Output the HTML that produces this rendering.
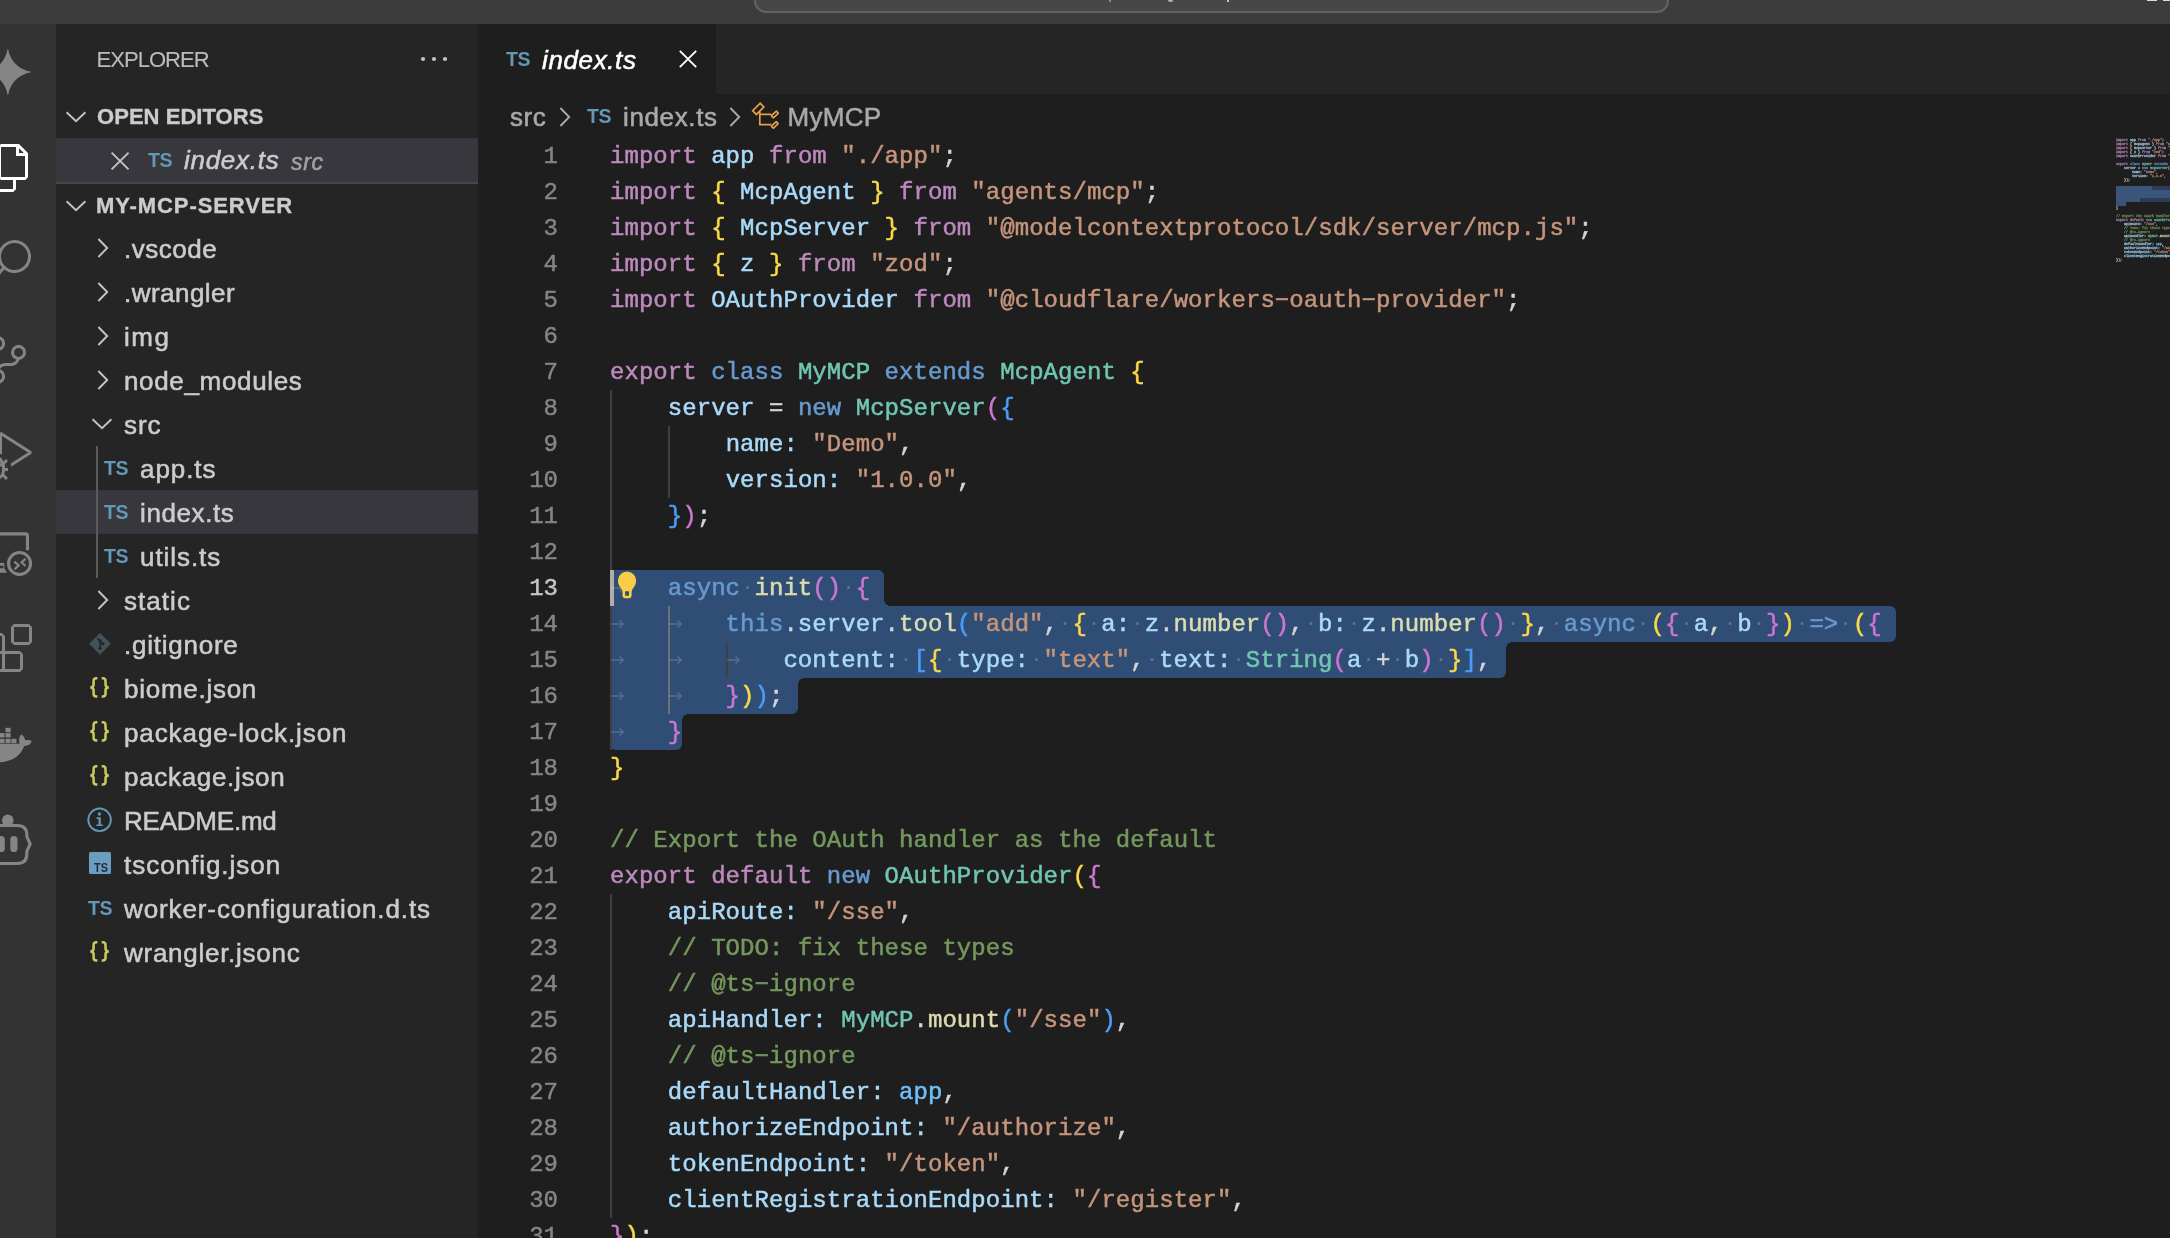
<!DOCTYPE html>
<html><head><meta charset="utf-8"><title>index.ts - my-mcp-server</title>
<style>
*{box-sizing:border-box;margin:0;padding:0}
html,body{width:2170px;height:1238px;overflow:hidden;background:#1e1e1e}
body{will-change:transform;position:relative;font-family:"Liberation Sans",sans-serif;color:#cccccc}
.abs,.ic,.rt,.tsi,.jsi,.sel,.g,.ln,.cl,.tscfg{position:absolute}
#title{left:0;top:0;width:2170px;height:24px;background:#3c3c3c}
#cmd{left:754px;top:-30px;width:915px;height:43px;background:#474747;border:2px solid #636363;border-radius:12px}
#act{left:0;top:24px;width:56px;height:1214px;background:#333333}
#side{left:56px;top:24px;width:422px;height:1214px;background:#252526}
#tabs{left:478px;top:24px;width:1692px;height:70px;background:#252526}
#tab{left:478px;top:24px;width:238px;height:70px;background:#1e1e1e}
.hl{left:56px;width:422px;height:44px;background:#37373d}
.rt{font-size:26px;line-height:44px;white-space:nowrap;color:#cccccc;-webkit-text-stroke:0.55px}
.tsi{font-weight:bold;color:#6398b7;font-size:19.5px;line-height:28px;letter-spacing:-0.4px}
.jsi{font-weight:bold;color:#cbcb5a;font-size:21px;line-height:34px;white-space:nowrap}
.tscfg{width:22px;height:22px;background:#6b9dc0;border-radius:1.5px}
.tscfg span{position:absolute;left:5.8px;top:8.3px;font-size:13.7px;line-height:13px;font-weight:bold;color:#1f2d3a;letter-spacing:0;display:inline-block;transform:scaleX(0.8);transform-origin:0 0}
.hdr{font-size:22px;line-height:44px;white-space:nowrap;-webkit-text-stroke:0.35px}
.ln{left:478px;width:80px;text-align:right;font-family:"Liberation Mono",monospace;font-size:24px;line-height:36px;height:36px;color:#858585;white-space:pre;-webkit-text-stroke:0.45px}
.ln.act{color:#c6c6c6}
.cl{left:610px;font-family:"Liberation Mono",monospace;font-size:24px;line-height:36px;height:36px;white-space:pre;letter-spacing:0.05px;color:#d4d4d4;-webkit-text-stroke:0.5px}
.dot{display:inline-block;width:14.45px;height:36px;vertical-align:top;background:radial-gradient(circle at 50% 16.6px, rgba(227,228,226,0.24) 1.1px, transparent 1.9px)}
.tb{display:inline-block;height:36px;vertical-align:top;position:relative}
.ar{position:absolute;left:0;top:11px}
.sel{background:#304e75}
#mm{font-family:"Liberation Mono",monospace;font-size:24px;letter-spacing:0.05px;-webkit-text-stroke:2.2px;opacity:0.78}
.ml{height:28.900px;line-height:28.900px;white-space:pre;overflow:hidden}
.g{width:2px}
.k{color:#bc89bd}
.b{color:#679ad1}
.v{color:#aadafa}
.t{color:#71c6b1}
.f{color:#dcdcaf}
.s{color:#c5947c}
.c{color:#74985d}
.p{color:#d4d4d4}
.y{color:#f9d849}
.m{color:#cc76d1}
.u{color:#4a9df8}
.n{color:#6fbff9}
.w{color:rgba(227,228,226,0.20)}
</style></head><body>
<div class="abs" id="title"></div>
<div class="abs" id="cmd"></div>
<div class="abs" style="left:1109px;top:0;width:2px;height:2px;background:#8a8a8a"></div>
<div class="abs" style="left:1168px;top:0;width:5px;height:2px;background:#b0b0b0;border-radius:0 0 3px 3px"></div>
<div class="abs" style="left:1227px;top:0;width:2px;height:2px;background:#c0c0c0"></div>
<div class="abs" style="left:2147px;top:0;width:10px;height:1px;background:#d8d8d8"></div>
<div class="abs" style="left:2163px;top:0;width:7px;height:1px;background:#d8d8d8"></div>
<div class="abs" id="act"></div>
<div class="abs" id="side"></div>
<div class="abs" id="tabs"></div>
<div class="abs" id="tab"></div>
<svg class="ic" style="left:0;top:0" width="56" height="1238" viewBox="0 0 56 1238"><path transform="translate(7.9,72)" d="M0,-23.8 Q3.8,-3.8 23.8,0 Q3.8,3.8 0,23.8 Q-3.8,3.8 -23.8,0 Q-3.8,-3.8 0,-23.8 Z" fill="#858585"/><g transform="translate(-16,144) scale(2)"><path d="M17.5 0h-9L7 1.5V6H2.5L1 7.5v15.07L2.5 24h12.07L16 22.57V18h4.7l1.3-1.43V4.5L17.5 0zm0 2.12l2.38 2.38H17.5V2.12zm-3 20.38h-12v-15H7v9.07L8.5 18h6v4.5zm6-6h-12v-15H16V6h4.5v10.5z" fill="#ffffff"/></g><g transform="translate(-16,240) scale(2)"><path d="M15.25 0a8.25 8.25 0 0 0-6.18 13.72L1 22.88l1.12 1 8.05-9.12A8.251 8.251 0 1 0 15.25.01V0zm0 15a6.75 6.75 0 1 1 0-13.5 6.75 6.75 0 0 1 0 13.5z" fill="#858585"/></g><g transform="translate(-16,336) scale(2)"><path d="M21.007 8.222A3.738 3.738 0 0 0 15.045 5.2a3.737 3.737 0 0 0 1.156 6.583 2.988 2.988 0 0 1-2.668 1.67h-2.99a4.456 4.456 0 0 0-2.989 1.165V7.4a3.737 3.737 0 1 0-1.494 0v9.117a3.776 3.776 0 1 0 1.816.099 2.99 2.99 0 0 1 2.668-1.667h2.99a4.484 4.484 0 0 0 4.223-3.039 3.736 3.736 0 0 0 3.25-3.687zM4.565 3.738a2.242 2.242 0 1 1 4.484 0 2.242 2.242 0 0 1-4.484 0zm4.484 16.441a2.242 2.242 0 1 1-4.484 0 2.242 2.242 0 0 1 4.484 0zm8.221-9.715a2.242 2.242 0 1 1 0-4.485 2.242 2.242 0 0 1 0 4.485z" fill="#858585"/></g><g transform="translate(-16,432) scale(2)"><path d="M10.94 13.5l-1.32 1.32a3.73 3.73 0 0 0-7.24 0L1.06 13.5 0 14.56l1.72 1.72-.22.22V18H0v1.5h1.5v.08c.077.489.214.966.41 1.42L0 22.94 1.06 24l1.65-1.65A4.308 4.308 0 0 0 6 24a4.31 4.31 0 0 0 3.29-1.65L10.94 24 12 22.94 10.09 21c.198-.464.336-.951.41-1.45v-.1H12V18h-1.5v-1.5l-.22-.22L12 14.56l-1.06-1.06zM6 13.5a2.25 2.25 0 0 1 2.25 2.25h-4.5A2.25 2.25 0 0 1 6 13.5zm3 6a3.33 3.33 0 0 1-3 3 3.33 3.33 0 0 1-3-3v-2.25h6v2.25zm14.76-9.9v1.26L13.5 17.37V15.6l8.5-5.37L9 2v9.46a5.07 5.07 0 0 0-1.5-.72V.63L8.64 0l15.12 9.6z" fill="#858585"/></g><g fill="none" stroke="#858585"><path d="M-12 533.9 H25.4 Q27.45 533.9 27.45 536 V550.2" stroke-width="3.1"/><circle cx="19.55" cy="563.5" r="11" stroke-width="3.1"/><path d="M14.35 561.6 L18.75 565.3 L14.5 569.4 M25.5 558.9 L21.65 562.3 L25.5 566" stroke-width="2.2"/></g><path d="M-6 563.1 H4.3 V568.2 L6.9 572.8 H-6 V568.2 H3.4 V565.7 H-6 Z" fill="#858585"/><g transform="translate(-16,624) scale(2)"><path d="M13.5 1.5L15 0h7.5L24 1.5V9l-1.5 1.5H15L13.5 9V1.5zm1.5 0V9h7.5V1.5H15zM0 15V6l1.5-1.5H9L10.5 6v7.5H18l1.5 1.5v7.5L18 24H1.5L0 22.5V15zm9-1.5V6H1.5v7.5H9zM9 15H1.5v7.5H9V15zm1.5 7.5H18V15h-7.5v7.5z" fill="#858585"/></g><rect x="5.5" y="727.8" width="5.1" height="4.4" fill="#858585"/><rect x="-0.6" y="733.1" width="5.1" height="4.4" fill="#858585"/><rect x="5.5" y="733.1" width="5.1" height="4.4" fill="#858585"/><rect x="-0.6" y="738.8" width="5.1" height="4.4" fill="#858585"/><rect x="5.5" y="738.8" width="5.1" height="4.4" fill="#858585"/><rect x="11.4" y="738.8" width="5.1" height="4.4" fill="#858585"/><path d="M-14 743.75 H19.6 C18.4 740 19.3 736 21.3 734.4 C23.6 735.6 25 738 25.2 740.3 C27.6 739.5 30 740 31.8 741.3 C30.5 744.2 27.6 746.3 24.2 746 C22.3 751.5 18 756.6 12.9 759 C8 761.4 3 762.4 -2 762.3 L-14 762.3 Z" fill="#858585"/><circle cx="7.76" cy="820.4" r="5.8" fill="#858585"/><path d="M-2 825.45 H17.2 Q26.85 825.45 26.85 835 V836.6 L30.2 844 L26.85 851.2 V854 Q26.85 863.45 17.2 863.45 H-2" fill="none" stroke="#858585" stroke-width="3.1" stroke-linejoin="round"/><rect x="10.3" y="835.9" width="7.2" height="16.1" rx="3.6" fill="#858585"/><rect x="-2.4" y="835.9" width="7.2" height="16.1" rx="3.6" fill="#858585"/></svg>
<div class="abs hdr" style="left:96.5px;top:38px;color:#bbbbbb;letter-spacing:-0.95px;-webkit-text-stroke:0.1px">EXPLORER</div>
<svg class="ic" style="left:420px;top:55px" width="28" height="8" viewBox="0 0 28 8"><circle cx="3" cy="4" r="2.1" fill="#c5c5c5"/><circle cx="14" cy="4" r="2.1" fill="#c5c5c5"/><circle cx="25" cy="4" r="2.1" fill="#c5c5c5"/></svg>
<svg class="ic" style="left:64px;top:109px" width="24" height="16" viewBox="0 0 24 16"><path d="M2.6 3.2 L12 12.3 L21.4 3.2" fill="none" stroke="#c5c5c5" stroke-width="1.9"/></svg>
<div class="abs hdr" style="left:97px;top:95px;font-weight:bold;color:#cccccc;letter-spacing:0.05px">OPEN EDITORS</div>
<div class="abs hl" style="top:138px"></div>
<svg class="ic" style="left:110px;top:151px" width="20" height="20" viewBox="0 0 20 20"><path d="M1.6 1.6 L18.6 18.4 M18.6 1.6 L1.6 18.4" stroke="#c5c5c5" stroke-width="1.9" fill="none"/></svg>
<div class="tsi" style="left:148px;top:146px">TS</div>
<div class="rt" style="left:184px;top:138px;font-style:italic;letter-spacing:0.72px">index.ts</div>
<div class="rt" style="left:291px;top:140px;font-style:italic;font-size:23px;color:#a2a2a2;letter-spacing:0.7px">src</div>
<div class="abs" style="left:56px;top:182px;width:422px;height:2px;background:#464648"></div>
<svg class="ic" style="left:64px;top:198px" width="24" height="16" viewBox="0 0 24 16"><path d="M2.6 3.2 L12 12.3 L21.4 3.2" fill="none" stroke="#c5c5c5" stroke-width="1.9"/></svg>
<div class="abs hdr" style="left:96px;top:184px;font-weight:bold;color:#cccccc;letter-spacing:0.9px">MY-MCP-SERVER</div>
<div class="abs hl" style="top:490px"></div>
<div class="abs" style="left:96px;top:446px;width:2px;height:132px;background:#5a5a5a"></div>
<svg class="ic" style="left:94.7px;top:236px" width="16" height="24" viewBox="0 0 16 24"><path d="M3.4 3 L12.2 12 L3.4 21" fill="none" stroke="#c5c5c5" stroke-width="1.9"/></svg><div class="rt" style="left:124px;top:227px;letter-spacing:0.53px;">.vscode</div><svg class="ic" style="left:94.7px;top:280px" width="16" height="24" viewBox="0 0 16 24"><path d="M3.4 3 L12.2 12 L3.4 21" fill="none" stroke="#c5c5c5" stroke-width="1.9"/></svg><div class="rt" style="left:124px;top:271px;letter-spacing:0.47px;">.wrangler</div><svg class="ic" style="left:94.7px;top:324px" width="16" height="24" viewBox="0 0 16 24"><path d="M3.4 3 L12.2 12 L3.4 21" fill="none" stroke="#c5c5c5" stroke-width="1.9"/></svg><div class="rt" style="left:124px;top:315px;letter-spacing:1.5px;">img</div><svg class="ic" style="left:94.7px;top:368px" width="16" height="24" viewBox="0 0 16 24"><path d="M3.4 3 L12.2 12 L3.4 21" fill="none" stroke="#c5c5c5" stroke-width="1.9"/></svg><div class="rt" style="left:124px;top:359px;letter-spacing:0.66px;">node_modules</div><svg class="ic" style="left:90px;top:416px" width="24" height="16" viewBox="0 0 24 16"><path d="M2.6 3.2 L12 12.3 L21.4 3.2" fill="none" stroke="#c5c5c5" stroke-width="1.9"/></svg><div class="rt" style="left:124px;top:403px;letter-spacing:0.95px;">src</div><div class="tsi" style="left:104px;top:454px">TS</div><div class="rt" style="left:140px;top:447px;letter-spacing:0.92px;">app.ts</div><div class="tsi" style="left:104px;top:498px">TS</div><div class="rt" style="left:140px;top:491px;letter-spacing:0.6px;">index.ts</div><div class="tsi" style="left:104px;top:542px">TS</div><div class="rt" style="left:140px;top:535px;letter-spacing:0.93px;">utils.ts</div><svg class="ic" style="left:94.7px;top:588px" width="16" height="24" viewBox="0 0 16 24"><path d="M3.4 3 L12.2 12 L3.4 21" fill="none" stroke="#c5c5c5" stroke-width="1.9"/></svg><div class="rt" style="left:124px;top:579px;letter-spacing:1.04px;">static</div><svg class="ic" style="left:87px;top:631px" width="26" height="26" viewBox="0 0 26 26"><path d="M13 2.4 L23.4 12.8 L13 23.2 L2.6 12.8 Z" fill="#45525a" stroke="#45525a" stroke-width="1" stroke-linejoin="round"/><path d="M10.2 7.2 L15.6 12.6 M13 10 V17" stroke="#252526" stroke-width="1.5" fill="none"/><circle cx="13" cy="17.3" r="1.7" fill="#252526"/><circle cx="15.8" cy="12.8" r="1.7" fill="#252526"/><circle cx="13" cy="9.6" r="1.6" fill="#252526"/></svg><div class="rt" style="left:124px;top:623px;letter-spacing:0.76px;">.gitignore</div><svg class="ic" style="left:88.9px;top:677.4px" width="22" height="22" viewBox="0 0 22 22"><g fill="none" stroke="#cbcb5a" stroke-width="2.5"><path d="M8.4 1.3 H7.3 Q4.6 1.3 4.6 4 V7.5 Q4.6 10.4 1.3 10.4 Q4.6 10.4 4.6 13.3 V16.8 Q4.6 19.5 7.3 19.5 H8.4"/><path d="M8.4 1.3 H7.3 Q4.6 1.3 4.6 4 V7.5 Q4.6 10.4 1.3 10.4 Q4.6 10.4 4.6 13.3 V16.8 Q4.6 19.5 7.3 19.5 H8.4" transform="translate(21.1,0) scale(-1,1)"/></g></svg><div class="rt" style="left:124px;top:667px;letter-spacing:0.73px;">biome.json</div><svg class="ic" style="left:88.9px;top:721.4px" width="22" height="22" viewBox="0 0 22 22"><g fill="none" stroke="#cbcb5a" stroke-width="2.5"><path d="M8.4 1.3 H7.3 Q4.6 1.3 4.6 4 V7.5 Q4.6 10.4 1.3 10.4 Q4.6 10.4 4.6 13.3 V16.8 Q4.6 19.5 7.3 19.5 H8.4"/><path d="M8.4 1.3 H7.3 Q4.6 1.3 4.6 4 V7.5 Q4.6 10.4 1.3 10.4 Q4.6 10.4 4.6 13.3 V16.8 Q4.6 19.5 7.3 19.5 H8.4" transform="translate(21.1,0) scale(-1,1)"/></g></svg><div class="rt" style="left:124px;top:711px;letter-spacing:0.9px;">package-lock.json</div><svg class="ic" style="left:88.9px;top:765.4px" width="22" height="22" viewBox="0 0 22 22"><g fill="none" stroke="#cbcb5a" stroke-width="2.5"><path d="M8.4 1.3 H7.3 Q4.6 1.3 4.6 4 V7.5 Q4.6 10.4 1.3 10.4 Q4.6 10.4 4.6 13.3 V16.8 Q4.6 19.5 7.3 19.5 H8.4"/><path d="M8.4 1.3 H7.3 Q4.6 1.3 4.6 4 V7.5 Q4.6 10.4 1.3 10.4 Q4.6 10.4 4.6 13.3 V16.8 Q4.6 19.5 7.3 19.5 H8.4" transform="translate(21.1,0) scale(-1,1)"/></g></svg><div class="rt" style="left:124px;top:755px;letter-spacing:0.68px;">package.json</div><svg class="ic" style="left:86px;top:806px" width="28" height="28" viewBox="0 0 28 28"><circle cx="13.6" cy="13.8" r="11.3" fill="none" stroke="#6398b7" stroke-width="1.9"/><path d="M10.6 11.2h4.2v7.2h1.9v1.7h-6.3v-1.7h2.1v-5.5h-1.9z" fill="#6398b7"/><circle cx="13.4" cy="8" r="1.7" fill="#6398b7"/></svg><div class="rt" style="left:124px;top:799px;letter-spacing:-0.22px;">README.md</div><div class="tscfg" style="left:88.5px;top:852.4px"><span>TS</span></div><div class="rt" style="left:124px;top:843px;letter-spacing:0.97px;">tsconfig.json</div><div class="tsi" style="left:88px;top:894px">TS</div><div class="rt" style="left:124px;top:887px;letter-spacing:0.89px;">worker-configuration.d.ts</div><svg class="ic" style="left:88.9px;top:941.4px" width="22" height="22" viewBox="0 0 22 22"><g fill="none" stroke="#cbcb5a" stroke-width="2.5"><path d="M8.4 1.3 H7.3 Q4.6 1.3 4.6 4 V7.5 Q4.6 10.4 1.3 10.4 Q4.6 10.4 4.6 13.3 V16.8 Q4.6 19.5 7.3 19.5 H8.4"/><path d="M8.4 1.3 H7.3 Q4.6 1.3 4.6 4 V7.5 Q4.6 10.4 1.3 10.4 Q4.6 10.4 4.6 13.3 V16.8 Q4.6 19.5 7.3 19.5 H8.4" transform="translate(21.1,0) scale(-1,1)"/></g></svg><div class="rt" style="left:124px;top:931px;letter-spacing:0.73px;">wrangler.jsonc</div>
<div class="tsi" style="left:506px;top:45px">TS</div>
<div class="rt" style="left:542px;top:38px;font-style:italic;color:#ffffff;letter-spacing:0.62px">index.ts</div>
<svg class="ic" style="left:678px;top:49.3px" width="20" height="20" viewBox="0 0 20 20"><path d="M1.8 1.8 L18.2 18.2 M18.2 1.8 L1.8 18.2" stroke="#ffffff" stroke-width="1.9" fill="none"/></svg>
<div class="rt" style="left:510px;top:95px;color:#a9a9a9;letter-spacing:0.6px">src</div>
<svg class="ic" style="left:556.5px;top:105px" width="16" height="24" viewBox="0 0 16 24"><path d="M3.4 3 L12.2 12 L3.4 21" fill="none" stroke="#a9a9a9" stroke-width="1.9"/></svg>
<div class="tsi" style="left:587px;top:102px">TS</div>
<div class="rt" style="left:623px;top:95px;color:#a9a9a9;letter-spacing:0.64px">index.ts</div>
<svg class="ic" style="left:726.5px;top:105px" width="16" height="24" viewBox="0 0 16 24"><path d="M3.4 3 L12.2 12 L3.4 21" fill="none" stroke="#a9a9a9" stroke-width="1.9"/></svg>
<svg class="ic" style="left:750px;top:100px" width="32" height="32" viewBox="0 0 32 32"><g fill="none" stroke="#e2a144" stroke-width="1.7"><rect x="-2.6" y="-5.3" width="5.2" height="10.6" transform="translate(8.25,8.85) rotate(45)"/><rect x="-1.45" y="-3.4" width="2.9" height="6.8" rx="0.4" transform="translate(24.85,14.5) rotate(47)"/><rect x="-1.45" y="-3.4" width="2.9" height="6.8" rx="0.4" transform="translate(24.75,24.9) rotate(47)"/><path d="M9.8 11.8 V24.7 H21.2 M9.8 14.3 H21.2"/></g></svg>
<div class="rt" style="left:787.5px;top:95px;color:#a9a9a9;letter-spacing:0.3px">MyMCP</div>
<div class="sel" style="left:610px;top:570px;width:273.6px;height:36px;border-radius:6px 6px 0px 0px"></div><div class="sel" style="left:610px;top:606px;width:1286.0px;height:36px;border-radius:0px 6px 6px 0px"></div><div class="sel" style="left:610px;top:642px;width:895.9px;height:36px;border-radius:0px 0px 6px 0px"></div><div class="sel" style="left:610px;top:678px;width:187.8px;height:36px;border-radius:0px 0px 6px 0px"></div><div class="sel" style="left:610px;top:714px;width:72.2px;height:36px;border-radius:0px 0px 6px 6px"></div><div class="abs" style="left:883.55px;top:600px;width:6px;height:6px;background:radial-gradient(circle at 100% 0, transparent 5.5px, #304e75 6px)"></div><div class="abs" style="left:797.85px;top:678px;width:6px;height:6px;background:radial-gradient(circle at 100% 100%, transparent 5.5px, #304e75 6px)"></div><div class="abs" style="left:682.25px;top:714px;width:6px;height:6px;background:radial-gradient(circle at 100% 100%, transparent 5.5px, #304e75 6px)"></div><div class="abs" style="left:1505.9px;top:642px;width:6px;height:6px;background:radial-gradient(circle at 100% 100%, transparent 5.5px, #304e75 6px)"></div>
<div class="g" style="left:610px;top:390px;height:180px;background:#404040"></div><div class="g" style="left:610px;top:570px;height:180px;background:#404040"></div><div class="g" style="left:668px;top:426px;height:72px;background:#404040"></div><div class="g" style="left:668px;top:606px;height:108px;background:#707070"></div><div class="g" style="left:726px;top:642px;height:36px;background:#404040"></div><div class="g" style="left:610px;top:894px;height:324px;background:#404040"></div>
<div class="abs" style="left:610px;top:570px;width:4px;height:36px;background:#aeafad"></div>
<div class="ln" style="top:139px">1</div><div class="cl" style="top:139px"><span class="k">import</span><span class="p"> </span><span class="v">app</span><span class="p"> </span><span class="k">from</span><span class="p"> </span><span class="s">"./app"</span><span class="p">;</span></div><div class="ln" style="top:175px">2</div><div class="cl" style="top:175px"><span class="k">import</span><span class="p"> </span><span class="y">{</span><span class="p"> </span><span class="v">McpAgent</span><span class="p"> </span><span class="y">}</span><span class="p"> </span><span class="k">from</span><span class="p"> </span><span class="s">"agents/mcp"</span><span class="p">;</span></div><div class="ln" style="top:211px">3</div><div class="cl" style="top:211px"><span class="k">import</span><span class="p"> </span><span class="y">{</span><span class="p"> </span><span class="v">McpServer</span><span class="p"> </span><span class="y">}</span><span class="p"> </span><span class="k">from</span><span class="p"> </span><span class="s">"@modelcontextprotocol/sdk/server/mcp.js"</span><span class="p">;</span></div><div class="ln" style="top:247px">4</div><div class="cl" style="top:247px"><span class="k">import</span><span class="p"> </span><span class="y">{</span><span class="p"> </span><span class="v">z</span><span class="p"> </span><span class="y">}</span><span class="p"> </span><span class="k">from</span><span class="p"> </span><span class="s">"zod"</span><span class="p">;</span></div><div class="ln" style="top:283px">5</div><div class="cl" style="top:283px"><span class="k">import</span><span class="p"> </span><span class="v">OAuthProvider</span><span class="p"> </span><span class="k">from</span><span class="p"> </span><span class="s">"@cloudflare/workers−oauth−provider"</span><span class="p">;</span></div><div class="ln" style="top:319px">6</div><div class="ln" style="top:355px">7</div><div class="cl" style="top:355px"><span class="k">export</span><span class="p"> </span><span class="b">class</span><span class="p"> </span><span class="t">MyMCP</span><span class="p"> </span><span class="b">extends</span><span class="p"> </span><span class="t">McpAgent</span><span class="p"> </span><span class="y">{</span></div><div class="ln" style="top:391px">8</div><div class="cl" style="top:391px"><span class="p">    </span><span class="v">server</span><span class="p"> = </span><span class="b">new</span><span class="p"> </span><span class="t">McpServer</span><span class="m">(</span><span class="u">{</span></div><div class="ln" style="top:427px">9</div><div class="cl" style="top:427px"><span class="p">        </span><span class="v">name:</span><span class="p"> </span><span class="s">"Demo"</span><span class="p">,</span></div><div class="ln" style="top:463px">10</div><div class="cl" style="top:463px"><span class="p">        </span><span class="v">version:</span><span class="p"> </span><span class="s">"1.0.0"</span><span class="p">,</span></div><div class="ln" style="top:499px">11</div><div class="cl" style="top:499px"><span class="p">    </span><span class="u">}</span><span class="m">)</span><span class="p">;</span></div><div class="ln" style="top:535px">12</div><div class="ln act" style="top:571px">13</div><div class="cl" style="top:571px"><span class="tb" style="width:57.80px"><svg class="ar" width="15" height="12" viewBox="0 0 15 12"><path d="M1 6 H13.4 M9.6 2.4 L13.4 6 L9.6 9.6" fill="none" stroke="rgba(227,228,226,0.22)" stroke-width="1.35"/></svg></span><span class="b">async</span><span class="dot"></span><span class="f">init</span><span class="m">()</span><span class="dot"></span><span class="m">{</span></div><div class="ln" style="top:607px">14</div><div class="cl" style="top:607px"><span class="tb" style="width:57.80px"><svg class="ar" width="15" height="12" viewBox="0 0 15 12"><path d="M1 6 H13.4 M9.6 2.4 L13.4 6 L9.6 9.6" fill="none" stroke="rgba(227,228,226,0.22)" stroke-width="1.35"/></svg></span><span class="tb" style="width:57.80px"><svg class="ar" width="15" height="12" viewBox="0 0 15 12"><path d="M1 6 H13.4 M9.6 2.4 L13.4 6 L9.6 9.6" fill="none" stroke="rgba(227,228,226,0.22)" stroke-width="1.35"/></svg></span><span class="b">this</span><span class="p">.</span><span class="v">server</span><span class="p">.</span><span class="f">tool</span><span class="u">(</span><span class="s">"add"</span><span class="p">,</span><span class="dot"></span><span class="y">{</span><span class="dot"></span><span class="v">a:</span><span class="dot"></span><span class="v">z</span><span class="p">.</span><span class="f">number</span><span class="m">()</span><span class="p">,</span><span class="dot"></span><span class="v">b:</span><span class="dot"></span><span class="v">z</span><span class="p">.</span><span class="f">number</span><span class="m">()</span><span class="dot"></span><span class="y">}</span><span class="p">,</span><span class="dot"></span><span class="b">async</span><span class="dot"></span><span class="y">(</span><span class="m">{</span><span class="dot"></span><span class="v">a</span><span class="p">,</span><span class="dot"></span><span class="v">b</span><span class="dot"></span><span class="m">}</span><span class="y">)</span><span class="dot"></span><span class="b">=&gt;</span><span class="dot"></span><span class="y">(</span><span class="m">{</span></div><div class="ln" style="top:643px">15</div><div class="cl" style="top:643px"><span class="tb" style="width:57.80px"><svg class="ar" width="15" height="12" viewBox="0 0 15 12"><path d="M1 6 H13.4 M9.6 2.4 L13.4 6 L9.6 9.6" fill="none" stroke="rgba(227,228,226,0.22)" stroke-width="1.35"/></svg></span><span class="tb" style="width:57.80px"><svg class="ar" width="15" height="12" viewBox="0 0 15 12"><path d="M1 6 H13.4 M9.6 2.4 L13.4 6 L9.6 9.6" fill="none" stroke="rgba(227,228,226,0.22)" stroke-width="1.35"/></svg></span><span class="tb" style="width:57.80px"><svg class="ar" width="15" height="12" viewBox="0 0 15 12"><path d="M1 6 H13.4 M9.6 2.4 L13.4 6 L9.6 9.6" fill="none" stroke="rgba(227,228,226,0.22)" stroke-width="1.35"/></svg></span><span class="v">content:</span><span class="dot"></span><span class="u">[</span><span class="y">{</span><span class="dot"></span><span class="v">type:</span><span class="dot"></span><span class="s">"text"</span><span class="p">,</span><span class="dot"></span><span class="v">text:</span><span class="dot"></span><span class="t">String</span><span class="m">(</span><span class="v">a</span><span class="dot"></span><span class="p">+</span><span class="dot"></span><span class="v">b</span><span class="m">)</span><span class="dot"></span><span class="y">}</span><span class="u">]</span><span class="p">,</span></div><div class="ln" style="top:679px">16</div><div class="cl" style="top:679px"><span class="tb" style="width:57.80px"><svg class="ar" width="15" height="12" viewBox="0 0 15 12"><path d="M1 6 H13.4 M9.6 2.4 L13.4 6 L9.6 9.6" fill="none" stroke="rgba(227,228,226,0.22)" stroke-width="1.35"/></svg></span><span class="tb" style="width:57.80px"><svg class="ar" width="15" height="12" viewBox="0 0 15 12"><path d="M1 6 H13.4 M9.6 2.4 L13.4 6 L9.6 9.6" fill="none" stroke="rgba(227,228,226,0.22)" stroke-width="1.35"/></svg></span><span class="m">}</span><span class="y">)</span><span class="u">)</span><span class="p">;</span></div><div class="ln" style="top:715px">17</div><div class="cl" style="top:715px"><span class="tb" style="width:57.80px"><svg class="ar" width="15" height="12" viewBox="0 0 15 12"><path d="M1 6 H13.4 M9.6 2.4 L13.4 6 L9.6 9.6" fill="none" stroke="rgba(227,228,226,0.22)" stroke-width="1.35"/></svg></span><span class="m">}</span></div><div class="ln" style="top:751px">18</div><div class="cl" style="top:751px"><span class="y">}</span></div><div class="ln" style="top:787px">19</div><div class="ln" style="top:823px">20</div><div class="cl" style="top:823px"><span class="c">// Export the OAuth handler as the default</span></div><div class="ln" style="top:859px">21</div><div class="cl" style="top:859px"><span class="k">export</span><span class="p"> </span><span class="k">default</span><span class="p"> </span><span class="b">new</span><span class="p"> </span><span class="t">OAuthProvider</span><span class="y">(</span><span class="m">{</span></div><div class="ln" style="top:895px">22</div><div class="cl" style="top:895px"><span class="p">    </span><span class="v">apiRoute:</span><span class="p"> </span><span class="s">"/sse"</span><span class="p">,</span></div><div class="ln" style="top:931px">23</div><div class="cl" style="top:931px"><span class="p">    </span><span class="c">// TODO: fix these types</span></div><div class="ln" style="top:967px">24</div><div class="cl" style="top:967px"><span class="p">    </span><span class="c">// @ts−ignore</span></div><div class="ln" style="top:1003px">25</div><div class="cl" style="top:1003px"><span class="p">    </span><span class="v">apiHandler:</span><span class="p"> </span><span class="t">MyMCP</span><span class="p">.</span><span class="f">mount</span><span class="u">(</span><span class="s">"/sse"</span><span class="u">)</span><span class="p">,</span></div><div class="ln" style="top:1039px">26</div><div class="cl" style="top:1039px"><span class="p">    </span><span class="c">// @ts−ignore</span></div><div class="ln" style="top:1075px">27</div><div class="cl" style="top:1075px"><span class="p">    </span><span class="v">defaultHandler:</span><span class="p"> </span><span class="n">app</span><span class="p">,</span></div><div class="ln" style="top:1111px">28</div><div class="cl" style="top:1111px"><span class="p">    </span><span class="v">authorizeEndpoint:</span><span class="p"> </span><span class="s">"/authorize"</span><span class="p">,</span></div><div class="ln" style="top:1147px">29</div><div class="cl" style="top:1147px"><span class="p">    </span><span class="v">tokenEndpoint:</span><span class="p"> </span><span class="s">"/token"</span><span class="p">,</span></div><div class="ln" style="top:1183px">30</div><div class="cl" style="top:1183px"><span class="p">    </span><span class="v">clientRegistrationEndpoint:</span><span class="p"> </span><span class="s">"/register"</span><span class="p">,</span></div><div class="ln" style="top:1219px">31</div><div class="cl" style="top:1219px"><span class="m">}</span><span class="y">)</span><span class="p">;</span></div>
<svg class="ic" style="left:616px;top:570px" width="24" height="30" viewBox="0 0 24 30"><path d="M11.05 1.6 a9.1 9.1 0 0 1 9.1 9.1 c0 3.4 -1.6 5.6 -3 7.6 c-1 1.5 -1.55 2.6 -1.55 4.6 v2.9 a2.4 2.4 0 0 1 -2.4 2.4 h-4.3 a2.4 2.4 0 0 1 -2.4 -2.4 v-2.9 c0 -2 -0.55 -3.1 -1.55 -4.6 c-1.4 -2 -3 -4.2 -3 -7.6 a9.1 9.1 0 0 1 9.1 -9.1 z M9.1 21.3 v4.4 h3.9 v-4.4 z" fill="#f7ce46" fill-rule="evenodd"/></svg>
<div class="abs" style="left:2116px;top:186px;width:36px;height:4px;background:#3b547a"></div><div class="abs" style="left:2152px;top:186px;width:18px;height:4px;background:#2d3d59"></div><div class="abs" style="left:2116px;top:190px;width:54px;height:4px;background:#3b547a"></div><div class="abs" style="left:2116px;top:194px;width:54px;height:4px;background:#3b547a"></div><div class="abs" style="left:2116px;top:198px;width:24px;height:4px;background:#3b547a"></div><div class="abs" style="left:2140px;top:198px;width:30px;height:4px;background:#2d3d59"></div><div class="abs" style="left:2116px;top:202px;width:10px;height:4px;background:#3b547a"></div><div class="abs" style="left:2116px;top:138px;width:54px;height:140px;overflow:hidden"><div id="mm" style="transform:scale(0.13841);transform-origin:0 0;width:600px"><div class="ml"><span class="k">import</span><span class="p"> </span><span class="v">app</span><span class="p"> </span><span class="k">from</span><span class="p"> </span><span class="s">"./app"</span><span class="p">;</span></div><div class="ml"><span class="k">import</span><span class="p"> { </span><span class="v">McpAgent</span><span class="p"> } </span><span class="k">from</span><span class="p"> </span><span class="s">"agent</span></div><div class="ml"><span class="k">import</span><span class="p"> { </span><span class="v">McpServer</span><span class="p"> } </span><span class="k">from</span><span class="p"> </span><span class="s">"@mod</span></div><div class="ml"><span class="k">import</span><span class="p"> { </span><span class="v">z</span><span class="p"> } </span><span class="k">from</span><span class="p"> </span><span class="s">"zod"</span><span class="p">;</span></div><div class="ml"><span class="k">import</span><span class="p"> </span><span class="v">OAuthProvider</span><span class="p"> </span><span class="k">from</span><span class="p"> </span><span class="s">"@clo</span></div><div class="ml"></div><div class="ml"><span class="k">export</span><span class="p"> </span><span class="b">class</span><span class="p"> </span><span class="t">MyMCP</span><span class="p"> </span><span class="b">extends</span><span class="p"> </span><span class="t">McpA</span></div><div class="ml"><span class="p">    </span><span class="v">server</span><span class="p"> = </span><span class="b">new</span><span class="p"> </span><span class="t">McpServer</span><span class="p">({</span></div><div class="ml"><span class="p">        </span><span class="v">name:</span><span class="p"> </span><span class="s">"Demo"</span><span class="p">,</span></div><div class="ml"><span class="p">        </span><span class="v">version:</span><span class="p"> </span><span class="s">"1.0.0"</span><span class="p">,</span></div><div class="ml"><span class="p">    });</span></div><div class="ml"></div><div class="ml"></div><div class="ml"></div><div class="ml"></div><div class="ml"></div><div class="ml"></div><div class="ml"><span class="p">}</span></div><div class="ml"></div><div class="ml"><span class="c">// Export the OAuth handler as </span></div><div class="ml"><span class="k">export</span><span class="p"> </span><span class="k">default</span><span class="p"> </span><span class="b">new</span><span class="p"> </span><span class="t">OAuthProvide</span></div><div class="ml"><span class="p">    </span><span class="v">apiRoute:</span><span class="p"> </span><span class="s">"/sse"</span><span class="p">,</span></div><div class="ml"><span class="p">    </span><span class="c">// TODO: fix these types</span></div><div class="ml"><span class="p">    </span><span class="c">// @ts-ignore</span></div><div class="ml"><span class="p">    </span><span class="v">apiHandler:</span><span class="p"> </span><span class="t">MyMCP</span><span class="p">.</span><span class="f">mount</span><span class="p">(</span><span class="s">"/s</span></div><div class="ml"><span class="p">    </span><span class="c">// @ts-ignore</span></div><div class="ml"><span class="p">    </span><span class="v">defaultHandler:</span><span class="p"> </span><span class="n">app</span><span class="p">,</span></div><div class="ml"><span class="p">    </span><span class="v">authorizeEndpoint:</span><span class="p"> </span><span class="s">"/author</span></div><div class="ml"><span class="p">    </span><span class="v">tokenEndpoint:</span><span class="p"> </span><span class="s">"/token"</span><span class="p">,</span></div><div class="ml"><span class="p">    </span><span class="v">clientRegistrationEndpoint:</span></div><div class="ml"><span class="p">});</span></div></div></div>
</body></html>
